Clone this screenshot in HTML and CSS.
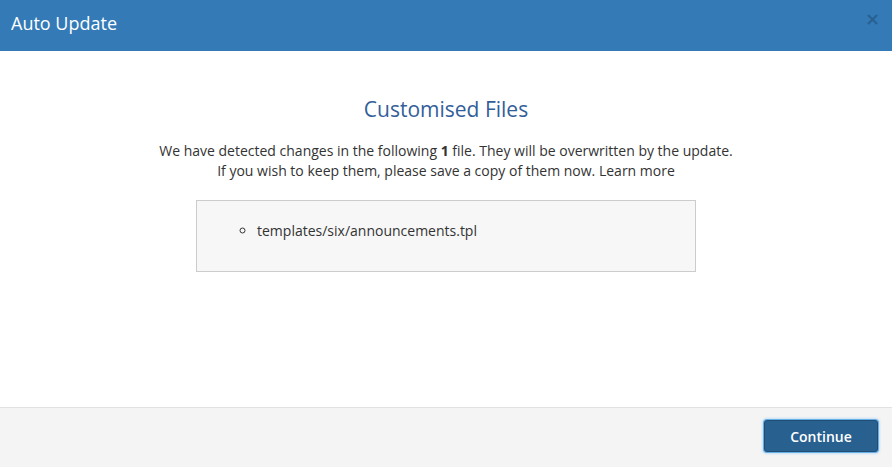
FILE: index.html
```html
<!DOCTYPE html>
<html>
<head>
<meta charset="utf-8">
<link rel="stylesheet" href="styles.css">
</head>
<body>
<div class="modal">
  <div class="modal-header">
    <h4 class="modal-title">Auto Update</h4>
    <span class="close">×</span>
  </div>
  <div class="modal-body">
    <h2 class="title">Customised Files</h2>
    <p class="desc">We have detected changes in the following <strong>1</strong> file. They will be overwritten by the update.<br>If you wish to keep them, please save a copy of them now. Learn more</p>
    <div class="files">
      <ul>
        <li>templates/six/announcements.tpl</li>
      </ul>
    </div>
  </div>
  <div class="modal-footer">
    <button class="btn">Continue</button>
  </div>
</div>
</body>
</html>
```
FILE: styles.css
```css
html, body {
  margin: 0;
  padding: 0;
  background: #fff;
}
body {
  font-family: "Open Sans", "Noto Sans", sans-serif;
  font-size: 14px;
  color: #333;
}
.modal {
  display: flex;
  flex-direction: column;
  height: 467px;
}
.modal-header {
  height: 51px;
  background: #337ab7;
  display: flex;
  align-items: center;
  justify-content: space-between;
  padding: 0 12px 0 11px;
  box-sizing: border-box;
}
.modal-title {
  margin: 0;
  color: #fff;
  font-size: 18px;
  font-weight: 500;
  margin-top: -5px;
}
.close {
  color: #000;
  opacity: 0.2;
  font-size: 18px;
  font-weight: bold;
  margin-top: -14px;
  font-family: "DejaVu Sans", sans-serif;
}
.modal-body {
  flex: 1;
  display: flex;
  flex-direction: column;
  align-items: center;
}
.title {
  margin: 45px 0 0;
  font-size: 21px;
  font-weight: 400;
  color: #335e99;
  line-height: 26px;
}
.desc {
  margin: 19px 0 0;
  text-align: center;
  line-height: 20px;
  color: #333;
}
.desc strong {
  font-weight: 700;
}
.files {
  margin-top: 19px;
  width: 500px;
  height: 72px;
  box-sizing: border-box;
  background: #f7f7f7;
  border: 1px solid #ccc;
}
.files ul {
  margin: 20px 0 0;
  padding-left: 60px;
  list-style: circle;
  line-height: 20px;
}
.modal-footer {
  height: 60px;
  box-sizing: border-box;
  border-top: 1px solid #e2e2e2;
  background: #f4f4f4;
  display: flex;
  align-items: center;
  justify-content: flex-end;
  padding: 0 14px 3px 0;
}
.btn {
  font-family: "Open Sans", "Noto Sans", sans-serif;
  font-size: 14px;
  font-weight: 600;
  color: #fff;
  background: #286090;
  border: 1px solid #204d74;
  border-radius: 3px;
  width: 114px;
  height: 32px;
  box-shadow: 0 0 0 1px #66afe9, 0 0 3px 1px rgba(102,175,233,0.6);
  padding: 0;
}
```
